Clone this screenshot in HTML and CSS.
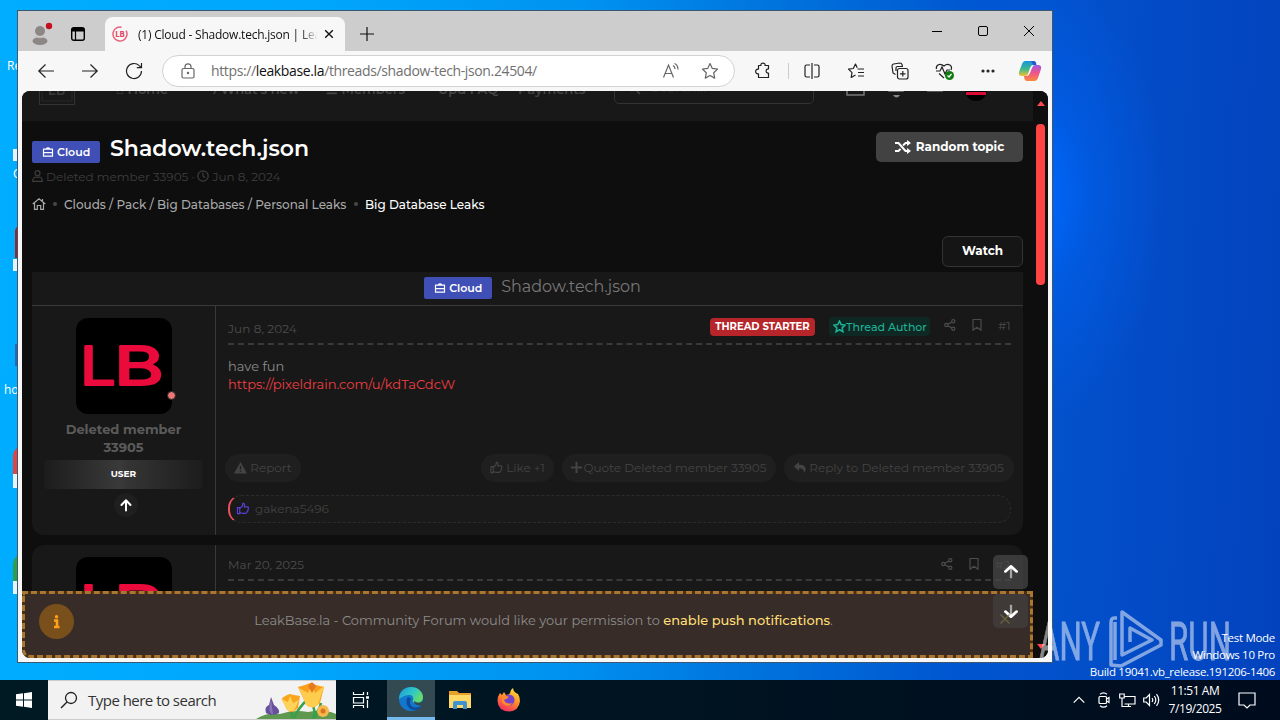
FILE: index.html
```html
<!DOCTYPE html>
<html lang="en">
<head>
  <meta charset="UTF-8">
  <meta name="viewport" content="width=device-width, initial-scale=1.0">
  <title>Cloud - Shadow.tech.json</title>
  <link rel="stylesheet" href="styles.css">
</head>
<body>
  <!-- Shared icons -->
  <svg class="sprite" width="0" height="0">
    <symbol id="case" viewBox="0 0 12 12"><path d="M1.500 3.200h9v7h-9zM4 3.200q2-2.500 4 0M1.500 6.700h9" fill="none" stroke="currentColor" stroke-width="1.200" stroke-linejoin="round"/></symbol>
    <symbol id="share" viewBox="0 0 12 12"><g fill="none" stroke="currentColor" stroke-width="1.200"><circle cx="2.300" cy="6" r="1.600"/><circle cx="9.300" cy="2.300" r="1.600"/><circle cx="9.300" cy="9.700" r="1.600"/><path d="M3.800 5.200l4-2.100M3.800 6.800l4 2.100"/></g></symbol>
    <symbol id="mark" viewBox="0 0 12 14"><path d="M2 1.500h8v10.800L6 9.300l-4 3z" fill="none" stroke="currentColor" stroke-width="1.200" stroke-linejoin="round"/></symbol>
    <symbol id="thumb" viewBox="0 0 14 14"><path d="M1 6h2.500v6.500H1zM3.500 7l2.700-2.500.6-3c1.800-.3 2.300 1.200 1.400 3.700h3.500c1.300 0 1.500 1.300.8 1.900.5.800.2 1.600-.4 1.900.2.800-.1 1.400-.7 1.600 0 1.200-.5 1.700-1.700 1.700H7c-1.500 0-2-.7-3.500-.8" fill="none" stroke="currentColor" stroke-width="1.200" stroke-linejoin="round"/></symbol>
    <symbol id="star" viewBox="0 0 18 18"><path d="M9 1.500l2.300 4.900 5.300.7-3.900 3.700 1 5.300L9 13.500l-4.700 2.600 1-5.300L1.400 7.100l5.300-.7z" fill="none" stroke="currentColor" stroke-width="1.200" stroke-linejoin="round"/></symbol>
    <symbol id="up" viewBox="0 0 14 14"><path d="M7 12.500V2.500M2.500 7L7 2.300 11.500 7" fill="none" stroke="currentColor" stroke-width="2" stroke-linejoin="round" stroke-linecap="round"/></symbol>
    <symbol id="jump" viewBox="0 0 16 16"><path d="M8 13.500V4" stroke="#a5a5a5" stroke-width="2"/><path d="M3 7.500L8 3l5 4.500" fill="none" stroke="#fff" stroke-width="2.400" stroke-linejoin="round" stroke-linecap="round"/></symbol>
    <symbol id="lb" viewBox="0 0 96 96"><rect width="96" height="96" rx="12" fill="#000"/><text x="4" y="67" textLength="36" lengthAdjust="spacingAndGlyphs" font-family="Inter, sans-serif" font-size="53" font-weight="400" fill="#ea0b3c" stroke="#ea0b3c" stroke-width="2.200" stroke-linejoin="round">L</text><text x="38" y="67" textLength="50" lengthAdjust="spacingAndGlyphs" font-family="Inter, sans-serif" font-size="53" font-weight="400" fill="#ea0b3c" stroke="#ea0b3c" stroke-width="2.200" stroke-linejoin="round">B</text></symbol>
  </svg>

  <div class="desktop">
    <!-- Desktop shortcuts, mostly behind the window -->
    <span class="shortcut-label s1">Re</span>
    <span class="shortcut-label s2">C</span>
    <span class="shortcut-label s3">ho</span>
    <span class="shortcut-icon i1"></span>
    <span class="shortcut-icon i2"></span>
    <span class="shortcut-icon i3"></span>
    <span class="shortcut-icon i4"></span>
    <span class="shortcut-icon i5"></span>
    <span class="shortcut-icon i6"></span>

    <div class="window">
      <!-- Tabs -->
      <div class="tabstrip">
        <svg class="profile" width="24" height="26" viewBox="0 0 24 26"><circle cx="10" cy="10" r="5" fill="#8c8785"/><ellipse cx="10" cy="20" rx="7.500" ry="4" fill="#8c8785"/><path d="M4.500 15.500q5.500 2.500 11 0" stroke="#c5c2c0" fill="none"/><circle cx="19" cy="5" r="3.200" fill="#c50f1f"/></svg>
        <svg class="workspaces" width="16" height="16" viewBox="0 0 16 16"><rect x="1.700" y="1.700" width="12.600" height="12.600" rx="2" fill="none" stroke="#000" stroke-width="1.400"/><path d="M2 2h12v3.500H2z"/><path d="M5.500 5v9" stroke="#000" stroke-width="1.200"/></svg>
        <div class="tab">
          <svg width="16" height="16" viewBox="0 0 16 16"><circle cx="8" cy="8" r="7" fill="none" stroke="#e8637c" stroke-width="1.500" stroke-dasharray="38 6" transform="rotate(-30 8 8)"/><text x="3.600" y="11" textLength="9" lengthAdjust="spacingAndGlyphs" font-family="Inter, sans-serif" font-size="8" font-weight="800" fill="#e04763">LB</text></svg>
          <span class="tab-title">(1) Cloud - Shadow.tech.json | Lea</span>
          <svg class="tab-close" width="10" height="10" viewBox="0 0 10 10"><path d="M1.200 1.200l7.600 7.600M8.800 1.200L1.200 8.800" stroke="#111" stroke-width="1.400"/></svg>
        </div>
        <svg class="new-tab" width="14" height="14" viewBox="0 0 14 14"><path d="M7 0v14M0 7h14" stroke="#111" stroke-width="1.200"/></svg>
        <div class="win-buttons">
          <svg width="12" height="12" viewBox="0 0 12 12"><path d="M1 6.500h10" stroke="#000"/></svg>
          <svg width="12" height="12" viewBox="0 0 12 12"><rect x="1.500" y="1.500" width="9" height="9" rx="1.500" fill="none" stroke="#000"/></svg>
          <svg width="12" height="12" viewBox="0 0 12 12"><path d="M1 1l10 10M11 1L1 11" stroke="#000"/></svg>
        </div>
      </div>

      <!-- Address bar -->
      <div class="toolbar">
        <div class="nav-buttons">
          <svg width="18" height="18" viewBox="0 0 18 18"><path d="M17 9H1.500M8.500 2.500L1.800 9l6.700 6.500"/></svg>
          <svg width="18" height="18" viewBox="0 0 18 18"><path d="M1 9h15.500M9.500 2.500L16.200 9l-6.700 6.500"/></svg>
          <svg width="18" height="18" viewBox="0 0 18 18"><path d="M16.500 9a7.500 7.500 0 1 1-2.300-5.400L16.300 5.500M16.500 1v4.700h-4.700"/></svg>
        </div>
        <div class="address">
          <svg class="lock" width="14" height="16" viewBox="0 0 14 16"><rect x="1" y="5.500" width="12" height="9.500" rx="1.500"/><path d="M4 5.500V3.800a3 3 0 0 1 6 0v1.700"/><circle cx="7" cy="10" r=".6"/></svg>
          <span class="url">https://<b>leakbase.la</b>/threads/shadow-tech-json.24504/</span>
          <svg class="read" width="18" height="18" viewBox="0 0 18 18"><path d="M1.500 15.500L6.500 3l5 12.500M3.200 11.500h6.600M11 3.500q2 1 2 3.500M12.500 1.500q3.500 1.500 3.500 6"/></svg>
          <svg class="fav" width="18" height="18"><use href="#star"/></svg>
        </div>
        <div class="tools">
          <svg width="18" height="18" viewBox="0 0 18 18"><path d="M4.500 3.500H7c-.8-3.200 4.800-3.200 4 0h3.500V7c-3.200-.6-3.200 4.600 0 4v4.500h-10v-3.700c-3.800.8-3.800-5.400 0-4.600z" stroke-linejoin="round"/></svg>
          <i class="divider"></i>
          <svg class="split" width="18" height="18" viewBox="0 0 18 18"><path d="M7 3H3.500Q2 3 2 4.500v9Q2 15 3.500 15H7M11 3h3.500Q16 3 16 4.500v9q0 1.500-1.500 1.500H11M9 1v16"/></svg>
          <svg width="18" height="18" viewBox="0 0 18 18"><path d="M10.200 5.700L8.500 2 6.300 6.500 1.500 7.200 5 10.700l-.8 4.800L8.500 13M10.500 7H17M11 10.500h6M11 14h6" stroke-linejoin="round"/></svg>
          <svg width="18" height="18" viewBox="0 0 18 18"><rect x="6.500" y="6.500" width="10.500" height="10.500" rx="2"/><path d="M11.800 9v5.500M9 11.800h5.500M4.500 12.500L2 11 1 4q0-1.500 1.500-2L9 1q1.500 0 2 1.500l.3 1.500M5 9V6q0-1.500 1.500-1.500H12"/></svg>
          <svg width="20" height="18" viewBox="0 0 20 18"><path d="M1.500 7C.5 3 5 .5 9 4c4-3.500 9-.5 7 4M1 9h4l2-4 3 7 2-4h3M4 11.500L9 16"/><circle cx="14.500" cy="13.500" r="4.500" class="ok"/><path d="M12.500 13.500l1.500 1.500 2.500-3" class="tick"/></svg>
          <svg class="dots" width="18" height="18" viewBox="0 0 18 18"><circle cx="4" cy="9" r="1"/><circle cx="9" cy="9" r="1"/><circle cx="14" cy="9" r="1"/></svg>
          <svg class="copilot" width="24" height="22" viewBox="0 0 24 22">
            <defs>
              <linearGradient id="c1" x1="0" y1="0" x2="0" y2="1"><stop offset="0" stop-color="#1795dd"/><stop offset=".55" stop-color="#40b88c"/><stop offset="1" stop-color="#f3c12e"/></linearGradient>
              <linearGradient id="c2" x1="0" y1="0" x2="0" y2="1"><stop offset="0" stop-color="#a25be0"/><stop offset=".5" stop-color="#f0558a"/><stop offset="1" stop-color="#f98a3c"/></linearGradient>
            </defs>
            <path d="M7 1h8q2 0 2.500 2l.5 2h-3q-2 0-3 3l-2 6q-1 2-3 2H4q-4 0-3-4L4 4q1-3 3-3z" fill="url(#c1)"/>
            <path d="M17 21H9q-2 0-2.500-2L6 16h3q2 0 3-3l2-5q1-3 3-3h3q4 0 3 4l-3 9q-1 3-3 3z" fill="url(#c2)"/>
            <path d="M13 1h3q2 0 2.500 4H15z" fill="#2758cf"/>
          </svg>
        </div>
      </div>

      <!-- Forum page -->
      <div class="page">
        <div class="forum">
          <header class="topnav">
            <div class="topnav-inner">
              <svg class="site-logo" width="36" height="36" viewBox="0 0 36 36"><rect x=".5" y=".5" width="35" height="35" fill="none" stroke="#333"/><rect x="3" y="3" width="30" height="29" fill="none" stroke="#292929"/><text x="9" y="26" font-family="Inter, sans-serif" font-size="14" font-weight="600" fill="#383838">LB</text></svg>
              <span>⌂ Home</span>
              <span>ϟ What's new</span>
              <span>☰ Members</span>
              <span>Upd FAQ</span>
              <span>Payments</span>
              <div class="search"><svg width="16" height="16" viewBox="0 0 16 16"><circle cx="6.500" cy="6.500" r="5"/><path d="M10 10l5 5"/></svg>Search…</div>
              <svg class="nav-icons" width="144" height="32" viewBox="0 0 144 32"><path d="M3 10h17v14H3z" fill="none" stroke="#777" stroke-width="1.500"/><path d="M44 21h16l-2-4V9h-12v8z" fill="#666"/><path d="M49 24h7q-3.500 5-7 0z" fill="#888"/><path d="M83 20.500h16" stroke="#555"/><circle cx="132" cy="19" r="11" fill="#000"/><path d="M122 22.500h20" stroke="#d90c38" stroke-width="3"/></svg>
            </div>
          </header>

          <main class="content">
            <div class="title-row">
              <span class="label"><svg width="12" height="12"><use href="#case"/></svg>Cloud</span>
              <h1>Shadow.tech.json</h1>
              <a class="btn-random"><svg width="16" height="14" viewBox="0 0 16 14"><path d="M0 3h3.500l7 8H14M0 11h3.500l2-2.200M8 5.500L10.500 3H14" fill="none" stroke="#fff" stroke-width="2"/><path d="M12 0l4 3-4 3zM12 8l4 3-4 3z" fill="#fff"/></svg>Random topic</a>
            </div>
            <div class="meta">
              <svg width="11" height="12" viewBox="0 0 11 12"><circle cx="5.500" cy="3.200" r="2.500"/><path d="M.7 11.300q0-4 3-4.300 1.800.8 3.600 0 3 .3 3 4.300z"/></svg>
              <span>Deleted member 33905</span><span>·</span>
              <svg width="12" height="12" viewBox="0 0 12 12"><circle cx="6" cy="6" r="5.200"/><path d="M6 2.500V6l2.200 1.700"/></svg>
              <span>Jun 8, 2024</span>
            </div>
            <nav class="crumbs">
              <svg width="14" height="12" viewBox="0 0 14 12"><path d="M.7 6L7 .8 13.300 6M2.500 5v6.300H5.300V7.500h3.400v3.800h2.800V5M10.500 3V1"/></svg>
              <i></i>
              <a class="crumb-parent">Clouds / Pack / Big Databases / Personal Leaks</a>
              <i></i>
              <a class="crumb-current">Big Database Leaks</a>
            </nav>
            <div class="actions"><a class="btn-watch">Watch</a></div>

            <div class="thread-head">
              <span class="label"><svg width="12" height="12"><use href="#case"/></svg>Cloud</span>
              <span class="thread-name">Shadow.tech.json</span>
            </div>

            <article class="post">
              <aside class="user">
                <div class="avatar"><svg width="96" height="96"><use href="#lb"/></svg><i></i></div>
                <h4>Deleted member<br>33905</h4>
                <div class="rank">USER</div>
                <div class="expand"><svg width="14" height="14"><use href="#up"/></svg></div>
              </aside>
              <section class="body">
                <div class="post-head">
                  <time>Jun 8, 2024</time>
                  <span class="starter">THREAD STARTER</span>
                  <span class="author"><svg width="13" height="13" viewBox="0 0 18 18"><path d="M9 1.500l2.300 4.900 5.300.7-3.900 3.700 1 5.300L9 13.500l-4.700 2.600 1-5.300L1.400 7.100l5.300-.7z"/></svg>Thread Author</span>
                  <svg class="ic-share" width="12" height="12"><use href="#share"/></svg>
                  <svg class="ic-mark" width="12" height="14"><use href="#mark"/></svg>
                  <span class="num">#1</span>
                </div>
                <div class="message">have fun<br><a>https://pixeldrain.com/u/kdTaCdcW</a></div>
                <div class="post-actions">
                  <a class="report"><svg width="13" height="12" viewBox="0 0 13 12"><path d="M6.500 0L13 11.500H0z" fill="currentColor"/><path d="M6.500 4v3.500M6.500 8.700v1.300" stroke="#1f1f1f" stroke-width="1.400"/></svg>Report</a>
                  <a class="like"><svg width="13" height="13"><use href="#thumb"/></svg>Like +1</a>
                  <a class="quote"><svg width="11" height="11" viewBox="0 0 11 11"><path d="M5.500 0v11M0 5.500h11" stroke="currentColor" stroke-width="2"/></svg>Quote Deleted member 33905</a>
                  <a class="reply"><svg width="12" height="11" viewBox="0 0 12 11"><path d="M0 4.500L5 0v2.700q7 0 6.500 5-.2 2-1.500 3.300.5-4.700-5-4.700V9z" fill="currentColor"/></svg>Reply to Deleted member 33905</a>
                </div>
                <div class="reactions"><svg width="14" height="13"><use href="#thumb"/></svg><span>gakena5496</span></div>
              </section>
            </article>

            <article class="post second">
              <aside class="user">
                <div class="avatar"><svg width="96" height="96"><use href="#lb"/></svg></div>
              </aside>
              <section class="body">
                <div class="post-head">
                  <time>Mar 20, 2025</time>
                  <svg class="ic-share" width="12" height="12"><use href="#share"/></svg>
                  <svg class="ic-mark" width="12" height="14"><use href="#mark"/></svg>
                  <span class="num">#2</span>
                </div>
              </section>
            </article>
          </main>

          <!-- Push notice -->
          <div class="notice">
            <svg class="info" width="35" height="35" viewBox="0 0 35 35"><circle cx="17.500" cy="17.500" r="17.500" fill="#79501c"/><circle cx="17.500" cy="12.700" r="1.700" fill="#ffa21a"/><path d="M15 16.500h3v6.200M15 23h5.500" stroke="#ffa21a" stroke-width="2.600" fill="none"/></svg>
            <p>LeakBase.la - Community Forum would like your permission to <b>enable push notifications</b>.</p>
          </div>
          <div class="jump">
            <span><svg width="18" height="18"><use href="#jump"/></svg></span>
            <span class="down"><svg width="18" height="18"><use href="#jump"/></svg></span>
          </div>
          <svg class="dismiss" width="10" height="10" viewBox="0 0 10 10"><path d="M.5.500l9 9M9.500.500l-9 9" stroke="#77703d" stroke-width="1.500"/></svg>
        </div>
        <div class="scrollbar"><i class="arrow-up"></i><i class="thumb"></i><i class="arrow-down"></i></div>
      </div>
    </div>

    <!-- Watermarks -->
    <svg class="anyrun" width="196" height="64" viewBox="0 0 196 64">
      <g font-family="Roboto, sans-serif" font-size="53" fill="#fff" stroke="#fff" stroke-width=".8">
        <text x="1" y="54" textLength="61" lengthAdjust="spacingAndGlyphs">ANY</text>
        <text x="131" y="54" textLength="62" lengthAdjust="spacingAndGlyphs">RUN</text>
      </g>
      <path d="M79 12h-3q-3 0-3 5v42l10 1 40-21v-5L84 6v43l30-15-22-12v14M77 16v38" fill="none" stroke="#fff" stroke-width="3.500" stroke-linejoin="round"/>
    </svg>
    <div class="build"><div>Test Mode</div><div>Windows 10 Pro</div><div>Build 19041.vb_release.191206-1406</div></div>

    <!-- Taskbar -->
    <div class="taskbar">
      <div class="start"><svg width="16" height="16" viewBox="0 0 16 16"><path d="M0 2.300L7 1.300v6.200H0zM8 1.200L16 0v7.500H8zM0 8.500h7v6.200l-7-1zM8 8.500h8V16l-8-1.200z" fill="#fff"/></svg></div>
      <div class="search-box">
        <svg class="lens" width="18" height="18" viewBox="0 0 18 18"><circle cx="11" cy="7" r="5.500" fill="none" stroke="#222" stroke-width="1.300"/><path d="M7 11l-6 6" stroke="#222" stroke-width="1.500"/></svg>
        <span>Type here to search</span>
        <svg class="flowers" width="80" height="38" viewBox="0 1 80 38">
          <path d="M0 39q12-7 24-5 14-5 28-2 16-4 28 2v6H0z" fill="#5f9950"/>
          <path d="M36 38q0-10-3-14M38 38q4-10 15-20M60 38q-3-12-4-20M56 38q8-8 9-15" stroke="#36a04a" stroke-width="2.500" fill="none"/>
          <path d="M15 17l3 8q6 4 5 8-7 4-13 0-2-6 3-8z" fill="#66509b"/><path d="M15 19l2 16q-6-3-2-16" fill="#8972b7"/>
          <path d="M26 18l5-3 3-1 4 1 6 1-2 12q-7 8-12 0z" fill="#f9a51d"/><path d="M25 19l7 3 2-6 3 7 6-3-5 11h-6z" fill="#ffd35a"/>
          <path d="M42 7l7-2 5-2 6 2 8 2-4 16q-8 8-15-1z" fill="#f8a01b"/><path d="M43 8l9 5 4-9 3 9 9-7-6 19q-6 5-12 0z" fill="#ffcd4d"/><path d="M52 6l4-4 4 4-4 7z" fill="#e87722"/>
          <circle cx="67" cy="31" r="6" fill="#f6b74b"/><circle cx="67" cy="31" r="2.500" fill="#db741e"/>
        </svg>
      </div>
      <div class="task"><svg width="18" height="18" viewBox="0 0 18 18" fill="none" stroke="#fff" stroke-width="1.200"><path d="M1.500 1v2.500h10V1M1.500 17v-2.500h10V17M1.500 6.500h10v5.500h-10zM15.500 1v3M15.500 9v8"/><path d="M14 6.500h3" stroke-width="2.500"/></svg></div>
      <div class="task active">
        <svg width="26" height="26" viewBox="0 0 26 26">
          <defs><linearGradient id="e1" x1="0" y1="0" x2="1" y2=".5"><stop offset="0" stop-color="#1799df"/><stop offset=".6" stop-color="#31c8c5"/><stop offset="1" stop-color="#64dc6a"/></linearGradient></defs>
          <circle cx="13" cy="13" r="12" fill="#1278cf"/>
          <path d="M1 13C1 6 6 1 13 1s12 5 12 10c0 4-3 6-6.500 6-3 0-4.500-1-3.500-3 1-3-1-5-4-5-5 0-8 3-10 4z" fill="url(#e1)"/>
          <path d="M10 11c-4 5 0 13 6 13 3 0 5-1 7-4-6 3-11 1-11-4q0-2 1-3z" fill="#0c4c9a"/>
          <path d="M16 15q0 4 5 4.500l3 .5 2 1V14q-4 5-10 1z" fill="#334a53"/>
        </svg>
      </div>
      <div class="task"><svg width="22" height="20" viewBox="0 0 22 20"><path d="M0 1h8l2 2h12v15H0z" fill="#e7a12b"/><path d="M0 5h22v13H0z" fill="#ffd866"/><path d="M4 18v-5q0-2 2-2h10q2 0 2 2v6h-4v-4H8v4H4z" fill="#3f91cf"/></svg></div>
      <div class="task"><svg width="24" height="24" viewBox="0 0 24 24">
        <defs><linearGradient id="f1" x1=".8" y1="0" x2=".3" y2="1"><stop offset="0" stop-color="#ffe83b"/><stop offset=".45" stop-color="#ff9329"/><stop offset="1" stop-color="#f22a62"/></linearGradient></defs>
        <path d="M3 5l2 2 2-3 2 3q3 0 4-2 0-3 3-5 0 3 3 5l2 1q2 3 2 7-1 10-11 10.500Q1 23 .5 13 .5 8 3 5z" fill="url(#f1)"/><circle cx="12" cy="12" r="5.500" fill="#7543c9"/><path d="M5 8q4-1 7 1-2 2-5 3 2 5 9 3-6 6-11-1z" fill="#ff8a2b"/></svg></div>
      <div class="tray">
        <svg class="t-up" width="12" height="8" viewBox="0 0 12 8"><path d="M.7 6.700L6 1.400l5.300 5.300"/></svg>
        <svg class="t-cam" width="12" height="16" viewBox="0 0 12 16"><rect x="1" y="4.500" width="7.500" height="7" rx="1"/><path d="M8.500 7l2.500-1.500v5L8.500 9M2 2.300Q5.500-.5 9 2.300M2 13.700q3.500 2.800 7 0"/></svg>
        <svg class="t-net" width="17" height="15" viewBox="0 0 17 15"><path d="M5 3.500h11V11H5.500M4 13.500h8M9.500 11v2.500M.7 1h4.500v4H.7zM3 5v8.500h2"/></svg>
        <svg class="t-vol" width="17" height="14" viewBox="0 0 17 14"><path d="M.7 5h2.500L6.500 1.500v11L3.200 9H.7zM9 5q1.500 2 0 4M11.300 3q3 4 0 8M13.500 1.200q4.500 5.800 0 11.600"/></svg>
        <div class="clock"><div>11:51 AM</div><div>7/19/2025</div></div>
        <svg class="t-note" width="18" height="17" viewBox="0 0 18 17"><path d="M1 1h16v12h-5L9 16l-3-3H1z"/></svg>
      </div>
    </div>
  </div>
</body>
</html>
```

FILE: styles.css
```css
/* General */
* {
  box-sizing: border-box;
}

body {
  margin: 0;
  overflow: hidden;
  font-family: "Open Sans", "Noto Sans", sans-serif;
}

svg {
  display: block;
  flex: none;
}

.sprite {
  position: absolute;
}

.desktop {
  position: relative;
  width: 1280px;
  height: 720px;
  overflow: hidden;
  background:
    radial-gradient(ellipse 130px 230px at 1035px 195px, #0068ff, rgba(0, 98, 240, 0.5) 45%, transparent),
    linear-gradient(92deg, #00adff 0%, #00a6fb 25%, #0092f0 45%, #0078df 57%, #0056d0 75%, #0350cb 83%, #0342bd 100%);
}

/* Desktop shortcuts */
.shortcut-label {
  position: absolute;
  color: #fff;
  font-size: 12px;
  line-height: 16px;
}

.s1 { left: 7px; top: 58px; }
.s2 { left: 13px; top: 166px; }
.s3 { left: 4px; top: 382px; }

.shortcut-icon {
  position: absolute;
  left: 13px;
  width: 12px;
  height: 12px;
  background: #e8f2f8;
}

.i1 { top: 149px; }
.i2 { top: 226px; left: 15px; height: 32px; border-radius: 5px 0 0 0; background: #a32024; }
.i3 { top: 259px; }
.i4 { top: 446px; height: 42px; background: linear-gradient(#e0453f 67%, #e8f2f8 67%); border-radius: 10px 0 0 0; }
.i5 { top: 554px; height: 40px; background: linear-gradient(#2d9e4c 68%, #e8f2f8 68%); border-radius: 10px 0 0 0; }
.i6 { top: 344px; left: 15px; height: 22px; background: #2b65b5; }

/* Browser window */
.window {
  position: absolute;
  left: 17px;
  top: 10px;
  width: 1036px;
  height: 653px;
  display: flex;
  flex-direction: column;
  border: 1px solid #3c5871;
  background: #f7f7f7;
}

.tabstrip {
  display: flex;
  align-items: center;
  height: 40px;
  padding: 6px 17px 0 12px;
  background: #cdcdcd;
}

.workspaces {
  margin: 0 0 0 16px;
}

.tab {
  display: flex;
  align-items: center;
  align-self: stretch;
  width: 240px;
  margin-left: 19px;
  padding: 0 11px 0 7px;
  border-radius: 8px 8px 0 0;
  background: #f7f7f7;
}

.tab-title {
  width: 180px;
  margin-left: 10px;
  overflow: hidden;
  white-space: nowrap;
  font-size: 12px;
  letter-spacing: -0.22px;
  color: #111;
  -webkit-mask-image: linear-gradient(90deg, #000 90%, transparent);
  mask-image: linear-gradient(90deg, #000 90%, transparent);
}

.tab-close {
  margin-left: auto;
}

.new-tab {
  margin-left: 15px;
}

.win-buttons {
  display: flex;
  gap: 34px;
  margin: -6px 0 0 auto;
}

/* Toolbar */
.toolbar {
  display: flex;
  align-items: center;
  height: 40px;
  padding-left: 19px;
}

.toolbar svg {
  fill: none;
  stroke: #222;
  stroke-width: 1.2;
}

.nav-buttons {
  display: flex;
  gap: 26px;
}

.address {
  display: flex;
  align-items: center;
  width: 573px;
  height: 32px;
  margin-left: 19px;
  padding: 0 15px 0 18px;
  border: 1px solid #d2d2d2;
  border-radius: 16px;
  background: #fff;
  color: #707070;
}

.toolbar .address svg {
  stroke: #666;
}

.toolbar .address .fav {
  color: #666;
  margin-left: 21px;
}

.url {
  margin: -1px 0 0 16px;
  font-size: 14px;
  letter-spacing: -0.37px;
}

.url b {
  font-weight: 400;
  color: #111;
}

.read {
  margin-left: auto;
}

.tools {
  display: flex;
  align-items: center;
  gap: 26px;
  margin-left: 19px;
}

.tools .divider {
  width: 1px;
  height: 16px;
  margin: 0 -12px 0 -10px;
  background: #ccc;
}

.tools .ok {
  fill: #107c10;
  stroke: none;
}

.tools .tick {
  stroke: #fff;
}

.toolbar .dots {
  margin-left: -2px;
  fill: #222;
}

.toolbar .copilot {
  margin-left: -5px;
  stroke: none;
}

/* Page area */
.page {
  display: flex;
  width: 1026px;
  height: 567px;
  margin-left: 4px;
  overflow: hidden;
  border-radius: 8px;
  background: #0e0e0e;
}

.forum {
  position: relative;
  width: 1011px;
  overflow: hidden;
  font-family: Montserrat, Inter, sans-serif;
  font-size: 12px;
  color: #8c8c8c;
}

.topnav {
  height: 30px;
  overflow: hidden;
  background: #181818;
}

.topnav-inner {
  display: grid;
  grid-template-columns: 77px 94px 116px 112px 80px 96px 230px 1fr;
  align-items: center;
  height: 60px;
  margin-top: -34px;
  padding-left: 17px;
  font-size: 13px;
  font-weight: 600;
  color: #444;
}

.topnav-inner span {
  margin-top: 3px;
}

.search {
  display: flex;
  align-items: center;
  gap: 10px;
  width: 200px;
  height: 34px;
  padding-left: 10px;
  border: 1px solid #333;
  border-radius: 5px;
  color: #2a2a2a;
}

.search svg {
  fill: none;
  stroke: #444;
  stroke-width: 1.5;
}

.content {
  padding: 11px 10px 0;
}

.title-row {
  display: flex;
  height: 30px;
}

.label {
  display: flex;
  align-items: center;
  gap: 3px;
  width: 68px;
  height: 22px;
  padding-left: 10px;
  border-radius: 2px;
  background: #3f4fb5;
  color: #fff;
  font-size: 11px;
  font-weight: 600;
}

.title-row .label {
  margin-top: 9px;
}

h1 {
  margin: 3px 0 0 10px;
  color: #fff;
  font-size: 22px;
  line-height: 28px;
  font-weight: 600;
}

.btn-random {
  display: flex;
  align-items: center;
  justify-content: center;
  gap: 5px;
  width: 147px;
  height: 30px;
  margin-left: auto;
  padding-bottom: 1px;
  border-radius: 5px;
  background: #424242;
  color: #fff;
  font-weight: 700;
}

.meta {
  display: flex;
  align-items: center;
  gap: 3px;
  height: 16px;
  margin-top: 6px;
  color: #3e3e3e;
}

.meta svg,
.crumbs svg {
  fill: none;
  stroke: currentColor;
  stroke-width: 1.2;
}

.crumbs {
  display: flex;
  align-items: center;
  height: 16px;
  margin-top: 12px;
  color: #a9a9a9;
}

.crumbs i {
  width: 4px;
  height: 4px;
  margin: 0 7px;
  border-radius: 50%;
  background: #484848;
}

.crumb-parent {
  width: 283px;
  font-weight: 500;
  white-space: nowrap;
}

.crumb-current {
  color: #fff;
  font-weight: 500;
}

.actions {
  display: flex;
  justify-content: flex-end;
  margin: 24px 0 5px;
}

.btn-watch {
  width: 81px;
  height: 31px;
  border: 1px solid #343434;
  border-radius: 6px;
  background: #151515;
  color: #fff;
  font-weight: 700;
  line-height: 28px;
  text-align: center;
}

/* Posts */
.thread-head {
  display: flex;
  justify-content: center;
  height: 34px;
  padding: 5px 0 0 10px;
  border-bottom: 1px solid #393939;
  background: #181818;
}

.thread-name {
  margin-left: 9px;
  font-size: 16px;
  line-height: 19px;
  color: #777;
}

.post {
  display: flex;
  height: 229px;
  border-radius: 0 0 12px 12px;
  background: #181818;
}

.second {
  margin-top: 10px;
  border-radius: 12px;
}

.user {
  display: flex;
  flex-direction: column;
  align-items: center;
  width: 184px;
  padding-top: 12px;
  border-right: 1px solid #393939;
}

.avatar {
  position: relative;
}

.avatar i {
  position: absolute;
  right: -4px;
  bottom: 14px;
  width: 9px;
  height: 9px;
  border: 1px solid #222;
  border-radius: 50%;
  background: #ed7777;
}

h4 {
  margin: 6px 0 4px;
  font-size: 13px;
  line-height: 18px;
  font-weight: 700;
  color: #5b5b5b;
  text-align: center;
}

.rank {
  width: 159px;
  height: 29px;
  border-radius: 3px;
  background: linear-gradient(90deg, #1c1c1c, #3a3a3a 48%, #353535 52%, #1c1c1c);
  color: #fff;
  font-size: 9px;
  font-weight: 700;
  line-height: 28px;
  text-align: center;
}

.expand {
  display: flex;
  align-items: center;
  justify-content: center;
  width: 24px;
  height: 24px;
  margin: 4px 0 0 4px;
  border-radius: 50%;
  background: #1f1f1f;
  color: #fff;
}

.body {
  flex: 1;
  padding: 9px 12px 0;
}

.post-head {
  display: flex;
  align-items: center;
  height: 30px;
  padding-bottom: 8px;
  border-bottom: 2px dashed #3a3a3a;
  color: #4c4c4c;
}

.post-head time {
  margin: 6px auto 0 0;
  letter-spacing: 0.08px;
}

.starter {
  width: 105px;
  height: 18px;
  margin-top: 3px;
  border-radius: 4px;
  background: #b52529;
  color: #fff;
  font-size: 10px;
  font-weight: 700;
  line-height: 18px;
  text-align: center;
}

.author {
  display: flex;
  align-items: center;
  width: 101px;
  height: 19px;
  margin: 3px 14px 0 14px;
  padding-left: 4px;
  border-radius: 4px;
  background: #0f2823;
  color: #1fb196;
  font-size: 11px;
  font-weight: 500;
  white-space: nowrap;
}

.author svg {
  fill: none;
  stroke: currentColor;
  stroke-width: 2.2;
}

.ic-mark {
  margin: 0 15px;
}

.num {
  width: 13px;
}

.message {
  height: 93px;
  padding-top: 12px;
  font-size: 13px;
  line-height: 18px;
}

.message a {
  color: #f03e42;
}

.post-actions {
  display: flex;
  gap: 8px;
  height: 28px;
  margin: 16px -3px 0;
  color: #444;
}

.post-actions a {
  display: flex;
  align-items: center;
  justify-content: center;
  gap: 3px;
  height: 28px;
  padding-bottom: 1px;
  border-radius: 14px;
  background: #1f1f1f;
  white-space: nowrap;
}

.post-actions .report {
  width: 76px;
  margin-right: auto;
}

.post-actions .like { width: 73px; }
.post-actions .quote { width: 214px; gap: 1px; }
.post-actions .reply { width: 230px; }

.reactions {
  display: flex;
  align-items: center;
  gap: 5px;
  height: 28px;
  margin-top: 13px;
  padding: 0 0 1px 6px;
  border: 1px dashed #2b2b2b;
  border-left: 2px solid #f0505c;
  border-radius: 13px;
  background: #1a1a1a;
  color: #5b3fe0;
}

.reactions span {
  color: #424242;
}

.second .post-head {
  height: 27px;
  padding-bottom: 5px;
}

.second time { margin-top: 1px; }
.second .num { width: 16px; }

/* Push notice */
.notice {
  position: absolute;
  left: 0;
  right: 0;
  bottom: 0;
  display: flex;
  align-items: center;
  height: 67px;
  padding: 0 17px 6px 14px;
  border: 3px dashed #a97731;
  border-radius: 0 0 0 8px;
  background: linear-gradient(#372c28, #372c28) padding-box, linear-gradient(#4b2f12, #4b2f12) border-box;
}

.notice p {
  flex: 1;
  margin: -3px 0 0;
  font-size: 13px;
  letter-spacing: -0.02px;
  text-align: center;
}

.notice b {
  color: #ffdf75;
  font-weight: 500;
}

.jump {
  position: absolute;
  left: 971px;
  top: 464px;
  display: flex;
  flex-direction: column;
  gap: 5px;
}

.jump span {
  display: flex;
  align-items: center;
  justify-content: center;
  width: 35px;
  height: 34px;
  border-radius: 5px;
  background: rgba(72, 72, 72, 0.7);
}

.jump .down {
  background: rgba(72, 72, 72, 0.5);
}

.jump .down svg {
  transform: rotate(180deg);
}

.dismiss {
  position: absolute;
  left: 978px;
  top: 523px;
  opacity: 0.7;
}

.scrollbar {
  display: flex;
  flex-direction: column;
  align-items: center;
  width: 15px;
  padding: 10px 0 9px;
  background: #0e0e0e;
}

.scrollbar i {
  border: 4.5px solid transparent;
}

.scrollbar .arrow-up {
  border-top: 0;
  border-bottom: 5px solid #ff4a4d;
}

.scrollbar .thumb {
  width: 9px;
  height: 161px;
  margin-top: 18px;
  border: 0;
  border-radius: 4px;
  background: #ff4343;
}

.scrollbar .arrow-down {
  margin-top: auto;
  border-bottom: 0;
  border-top: 5px solid #ff4a4d;
}

/* Watermarks */
.anyrun {
  position: absolute;
  left: 1038px;
  top: 606px;
  opacity: 0.5;
}

.build {
  position: absolute;
  right: 5px;
  top: 629px;
  color: #fff;
  font-size: 11.5px;
  line-height: 17px;
  text-align: right;
  letter-spacing: -0.3px;
}

/* Taskbar */
.taskbar {
  position: absolute;
  left: 0;
  bottom: 0;
  display: flex;
  width: 1280px;
  height: 40px;
  background: linear-gradient(90deg, #001a24, #001421 50%, #000c1e);
}

.start,
.task {
  display: flex;
  align-items: center;
  justify-content: center;
  width: 48px;
}

.task {
  width: 49px;
}

.search-box {
  display: flex;
  align-items: center;
  width: 288px;
  padding-left: 12px;
  border: 1px solid #ccc;
  border-width: 1px 0;
  background: #f2f2f2;
  color: #333;
  font-size: 15px;
  letter-spacing: -0.52px;
}

.search-box span {
  margin-left: 10px;
}

.flowers {
  margin-left: auto;
}

.task.active {
  margin-left: 2px;
  width: 48px;
  border-bottom: 3px solid #76b9ed;
  background: #334a53;
}

.tray {
  display: flex;
  align-items: center;
  margin-left: auto;
  padding-right: 24px;
}

.tray svg {
  fill: none;
  stroke: #fff;
  stroke-width: 1.2;
}

.t-cam { margin-left: 13px; }
.t-net { margin-left: 9px; }
.t-vol { margin-left: 7px; }

.clock {
  width: 70px;
  margin: 0 8px 0 0;
  color: #fff;
  font-size: 12px;
  line-height: 18px;
  letter-spacing: -0.45px;
  text-align: center;
}
```
